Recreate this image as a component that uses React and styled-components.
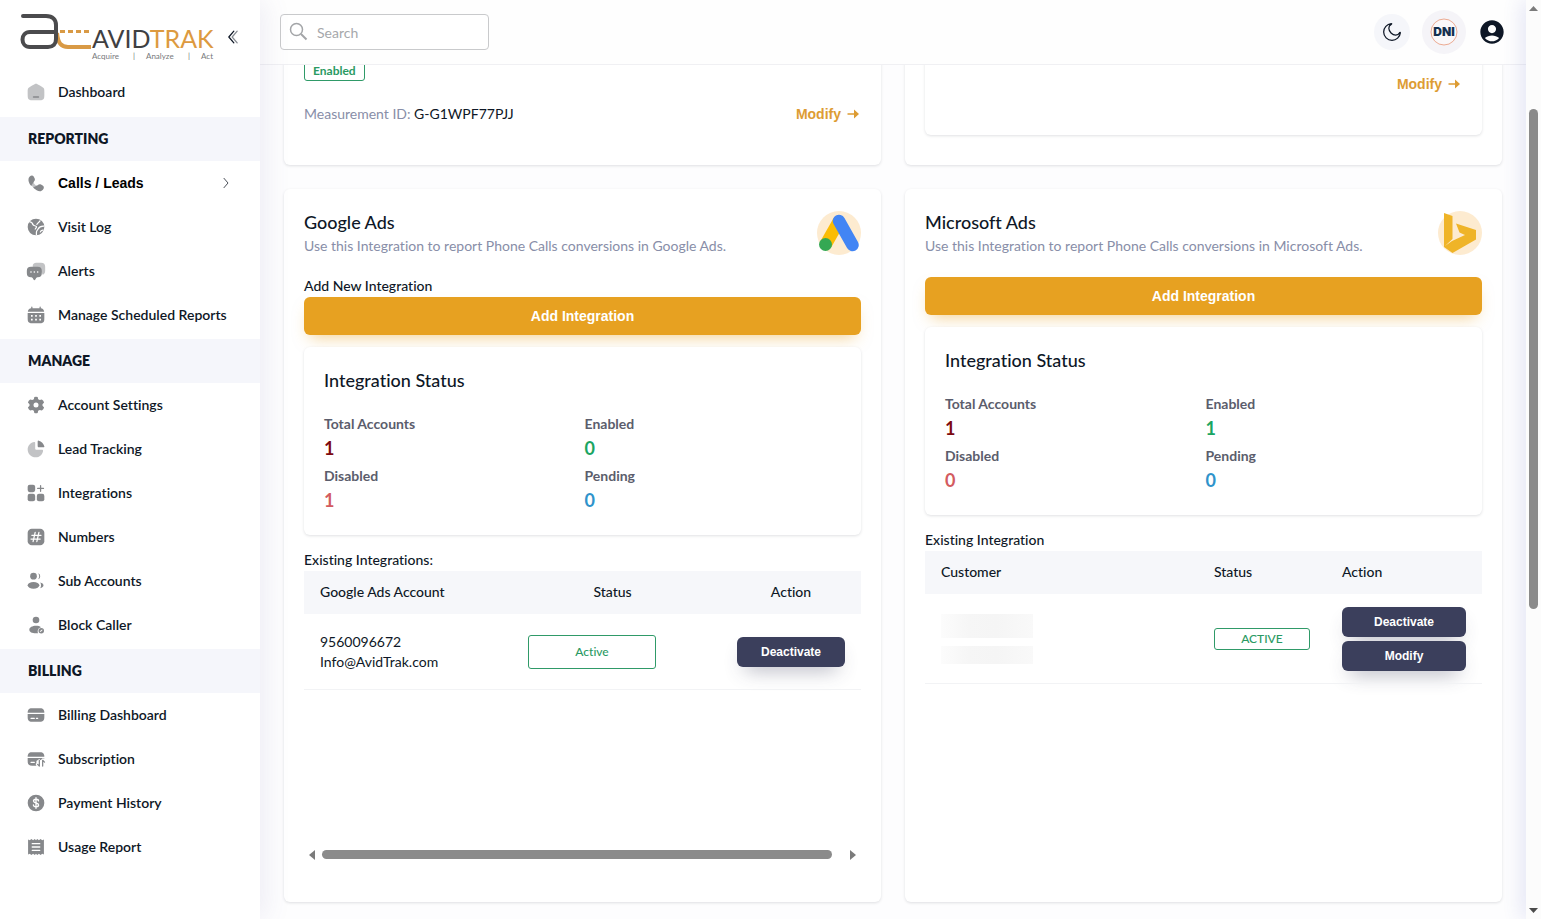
import React from 'react'
import styled, { createGlobalStyle, css } from 'styled-components'

const GlobalStyle = createGlobalStyle`
  * {
    box-sizing: border-box;
  }
  body {
    margin: 0;
    background: #fdfdfe;
    color: #0e1726;
    font-family: Lato, 'Open Sans', sans-serif;
    font-size: 14px;
    font-variant-ligatures: none;
    line-height: 20px;
  }
  button, input {
    font: inherit;
  }
`

/* ---------- icons ---------- */

const Svg = styled.svg`
  width: ${props => props.$size || 20}px;
  height: ${props => props.$size || 20}px;
  flex: none;
  display: block;
`

const icons = {
  home: (
    <>
      <path opacity="0.5" d="M2 12.2C2 9.9 2 8.8 2.5 7.8C3 6.9 4 6.3 5.9 5.1L7.9 3.9C9.9 2.6 10.9 2 12 2C13.1 2 14.1 2.6 16.1 3.9L18.1 5.1C20 6.3 21 6.9 21.5 7.8C22 8.8 22 9.9 22 12.2V13.7C22 17.6 22 19.6 20.8 20.8C19.7 22 17.8 22 14 22H10C6.2 22 4.3 22 3.2 20.8C2 19.6 2 17.6 2 13.7Z" />
      <rect x="8.2" y="17.2" width="7.6" height="1.6" rx="0.8" />
    </>
  ),
  phone: (
    <>
      <path d="M9.2 4.2L10.3 6.2C11 7.500 10.700 9.100 9.600 10.200L8 12.500L6.300 15.500C3.200 12 2.800 9.500 3 7.500C3.100 6.200 3.500 5.200 4.500 4.200C6 2.700 8.200 2.500 9.200 4.200Z" />
      <path d="M8.500 17.500L14 14.600C15.100 13.500 16.800 13.200 18 13.900L20 15C21.800 16.100 21.900 18.400 20.300 20C19.300 21 18.200 21.800 16.800 21.900C14.500 22 11.500 20.500 8.500 17.500Z" />
      <path opacity="0.5" d="M9.600 10.200C8.800 11 9 12.100 10.600 13.700C12.200 15.300 13.200 15.400 14 14.600L10.500 19L5 13.500Z" />
    </>
  ),
  globe: (
    <>
      <circle cx="12" cy="12" r="10" />
      <path d="M4 5.6C7 6 8 7.600 8.400 9.400C9 11 11.500 10 12.500 11.500C13 13 11 13.500 11 15M22 11C17.500 10.500 15.500 12.500 14.500 14.500C13.800 16 12.500 16 12.500 18.500V22M17 4C16.500 6.500 13.500 6.500 12.800 9.500M21 15.800C19 15.500 17.500 16.500 17 18.500" fill="none" stroke="#fff" strokeWidth="1.5" />
    </>
  ),
  chat: (
    <>
      <path opacity="0.5" d="M8 6.500C8 3.500 9.500 2 12.500 2H18C21.500 2 23 3.500 23 7V11.500C23 14.500 22 16 20 16.500L17 10L8 7Z" />
      <path fillRule="evenodd" d="M6 7H14C17.500 7 19 8.500 19 12V14.500C19 18 17.500 19.500 14 19.500C13.200 19.500 12.700 19.700 12.200 20.500L11.200 22.300C10.700 23.200 9.500 23.200 9 22.300L8 20.500C7.500 19.700 7 19.500 6 19.500C2.500 19.500 1 18 1 14.500V12C1 8.500 2.500 7 6 7ZM5 13.200A1 1 0 1 0 7 13.200A1 1 0 1 0 5 13.200ZM9 13.200A1 1 0 1 0 11 13.200A1 1 0 1 0 9 13.200ZM13 13.200A1 1 0 1 0 15 13.200A1 1 0 1 0 13 13.200Z" />
    </>
  ),
  calendar: (
    <>
      <path d="M7 1.750C7.400 1.750 7.750 2.100 7.750 2.500V4H16.250V2.500A0.750 0.750 0 0 1 17.750 2.500V4C20 4.200 21.500 5.500 21.800 8H2.200C2.500 5.500 4 4.200 6.250 4V2.500C6.250 2.100 6.600 1.750 7 1.750Z" />
      <path d="M2 9.500H22V14C22 17.800 22 19.700 20.800 20.800C19.700 22 17.800 22 14 22H10C6.200 22 4.300 22 3.200 20.800C2 19.700 2 17.800 2 14Z" />
      <path d="M6 13H8M11 13H13M16 13H18M6 17.500H8M11 17.500H13M16 17.500H18" stroke="#fff" strokeWidth="2" />
    </>
  ),
  gear: (
    <path fillRule="evenodd" d="M10 2.500Q12 1.500 14 2.500L14.600 5L16.500 6L19 5.300Q21 6.600 21.700 9L19.800 11V13L21.700 15Q21 17.400 19 18.700L16.500 18L14.600 19L14 21.500Q12 22.500 10 21.500L9.400 19L7.500 18L5 18.700Q3 17.400 2.300 15L4.200 13V11L2.300 9Q3 6.600 5 5.300L7.500 6L9.400 5ZM12 9A3 3 0 1 0 12 15A3 3 0 1 0 12 9Z" />
  ),
  pie: (
    <>
      <path opacity="0.5" d="M10 3.500C5.500 4 2 7.800 2 12.500C2 17.700 6.300 22 11.500 22C16.200 22 20.100 18.500 20.500 14C20.500 13.300 20.200 13 19.500 13H13C11.500 13 11 12.500 11 11V4.500C11 3.800 10.700 3.400 10 3.500Z" />
      <path d="M14 3C14 2.200 14.600 1.800 15.300 2C18.500 2.800 21.200 5.500 22 8.700C22.200 9.400 21.800 10 21 10H15.500C14.500 10 14 9.500 14 8.500Z" />
    </>
  ),
  widgets: (
    <>
      <rect x="2" y="2" width="9" height="9" rx="2.500" />
      <rect x="2" y="13" width="9" height="9" rx="2.500" />
      <rect x="13" y="13" width="9" height="9" rx="2.500" />
      <path d="M17.500 3V10M14 6.500H21" stroke="currentColor" strokeWidth="1.500" strokeLinecap="round" />
    </>
  ),
  hash: (
    <>
      <rect x="2" y="2" width="20" height="20" rx="5" />
      <path d="M11 6.500L8.500 17.500M15.500 6.500L13 17.500M7 10H18M6 14.500H17" stroke="#fff" strokeWidth="1.500" strokeLinecap="round" />
    </>
  ),
  users: (
    <>
      <circle cx="9" cy="6.200" r="4" />
      <path d="M14.500 2.600A3.800 3.800 0 0 1 14.500 9.800A6 6 0 0 0 14.500 2.600Z" />
      <ellipse cx="9" cy="17.200" rx="7" ry="4" />
      <path d="M17 13.700C19.500 14.200 21 15.500 21 17.200C21 18.900 19.500 20.200 17 20.600C18.400 19 18.400 15.500 17 13.700Z" />
    </>
  ),
  block: (
    <>
      <circle cx="12" cy="6" r="4" />
      <path d="M12 13C7.600 13 4 15 4 17.700C4 20.400 7 22 12 22H14.500C13.500 19.500 14 16 18 14.700C16.500 13.600 14.500 13 12 13Z" />
      <path fillRule="evenodd" d="M18.300 15.500A3.300 3.300 0 1 1 18.300 22.100A3.300 3.300 0 1 1 18.300 15.500ZM16.500 19.500L17.500 20.400L20 18L19.200 17.300Z" />
    </>
  ),
  card: (
    <>
      <path d="M2 9.250C2 6.500 3.200 4 7 4H17C20.800 4 22 6.500 22 9.250Z" />
      <path fillRule="evenodd" d="M2 10.750H22V14C22 18.200 21 20 16.500 20H7.500C3 20 2 18.200 2 14ZM6 15.250H10A0.750 0.750 0 0 1 10 16.750H6A0.750 0.750 0 0 1 6 15.250ZM12.500 15.250H14A0.750 0.750 0 0 1 14 16.750H12.500A0.750 0.750 0 0 1 12.500 15.250Z" />
    </>
  ),
  cardTransfer: (
    <>
      <path d="M2 9.250C2 6.500 3.200 4 7 4H17C20.800 4 22 6.500 22 9.250Z" />
      <path fillRule="evenodd" d="M2 10.750H22V11.500L20 11L17.500 13.500L16 12L12.500 14.500V17L11.500 18L12.500 20H7.500C3 20 2 18.200 2 14ZM6 15.250H10A0.750 0.750 0 0 1 10 16.750H6A0.750 0.750 0 0 1 6 15.250Z" />
      <path d="M16 13.500V20.500L14 18.500M20 20.500V13.500L22.200 15.700" fill="none" stroke="currentColor" strokeWidth="1.500" strokeLinecap="round" strokeLinejoin="round" />
    </>
  ),
  dollar: (
    <>
      <circle cx="12" cy="12" r="10" />
      <path d="M15 9.500C15 8.200 13.700 7.500 12 7.500C10.300 7.500 9 8.300 9 9.700C9 11 10.200 11.600 12 12C13.800 12.400 15.100 13 15.100 14.400C15.100 15.800 13.700 16.600 12 16.600C10.200 16.600 9 15.800 8.900 14.400M12 5.700V18.300" fill="none" stroke="#fff" strokeWidth="1.600" strokeLinecap="round" />
    </>
  ),
  receipt: (
    <>
      <path d="M2.500 3L4.500 4L6.500 2.500L8.500 4L10.500 2.500L12 4L13.500 2.500L15.500 4L17.500 2.500L19.500 4L21.500 3V21L19.500 20L17.500 21.500L15.500 20L13.500 21.500L12 20L10.500 21.500L8.500 20L6.500 21.500L4.500 20L2.500 21Z" />
      <path d="M7.500 8H16.500M7.500 12H16.500M7.500 16H16.500" stroke="#fff" strokeWidth="1.600" strokeLinecap="round" />
    </>
  ),
}

const Icon = ({ name }) => (
  <Svg viewBox="0 0 24 24" fill="currentColor" aria-hidden="true">
    {icons[name]}
  </Svg>
)

const LogoSvg = styled.svg`
  display: block;
  width: 200px;
  height: 52px;
  flex: none;
`

const Logo = () => (
  <LogoSvg viewBox="0 0 200 52" role="img" aria-label="AvidTrak">
    <g fill="none" strokeWidth="4">
      <path d="M43 20.500H72" stroke="#d99a45" strokeWidth="3" strokeDasharray="5 3" />
      <path d="M40 22C41 32 44 36 51 36H74" stroke="#d99a45" />
      <path d="M6 5H29C36 5 39 9 39 14V28C39 33 36 36 31 36H13C8 36 5.500 32.500 5.500 28.500C5.500 24.500 8 21 13 21H39" stroke="#4b4b4d" strokeLinecap="round" />
    </g>
    <text x="75" y="37" fontFamily="Lato" fontWeight="400" fontSize="25" fill="#3f4042">
      AVID<tspan fill="#dd9a3f">TRAK</tspan>
    </text>
    <g fontFamily="Lato" fontSize="8" fill="#77787b">
      <text x="75" y="48">Acquire</text>
      <text x="116" y="48">|</text>
      <text x="129" y="48">Analyze</text>
      <text x="171" y="48">|</text>
      <text x="184" y="48">Act</text>
    </g>
  </LogoSvg>
)

const GoogleAdsLogo = () => (
  <Svg $size={44} viewBox="0 0 44 44" aria-hidden="true">
    <circle cx="22" cy="22" r="22" fill="#fdebd0" />
    <path d="M22 10L9 33" stroke="#fbbc04" strokeWidth="12.500" />
    <path d="M22 10L35.500 34" stroke="#4285f4" strokeWidth="12.500" strokeLinecap="round" />
    <circle cx="8.500" cy="33.500" r="6.500" fill="#34a853" />
  </Svg>
)

const BingLogo = () => (
  <Svg $size={44} viewBox="0 0 44 44" aria-hidden="true">
    <circle cx="22" cy="22" r="22" fill="#fdebd0" />
    <path d="M6 2L14.500 5V28L7 35L14 30L27 24L21.500 21.500L18 12.500L38 19V28.500L14.500 42L6 36Z" fill="#efb428" />
  </Svg>
)

/* ---------- sidebar ---------- */

const Sidebar = styled.aside`
  width: 260px;
  flex: none;
  background: #fff;
  box-shadow: 5px 0 25px 0 rgba(94, 92, 154, 0.1);
  position: relative;
  z-index: 3;
`

const SidebarTop = styled.div`
  display: flex;
  align-items: center;
  justify-content: space-between;
  height: 70px;
  padding: 4px 16px 0 17px;
`

const IconButton = styled.button`
  display: flex;
  align-items: center;
  justify-content: center;
  width: ${props => props.$size}px;
  height: ${props => props.$size}px;
  padding: 0;
  border: 0;
  border-radius: 50%;
  background: ${props => props.$bg || 'none'};
  color: #0e1726;
`

const GroupTitle = styled.h2`
  margin: 3px 0 0;
  padding: 0 28px;
  background: #f5f6fb;
  font-size: 14px;
  font-weight: 800;
  line-height: 44px;
`

const NavList = styled.ul`
  list-style: none;
  margin: 0 0 -1px;
  padding: 0;

  &:first-child {
    margin-bottom: 0;
  }
`

const NavLink = styled.a`
  display: flex;
  align-items: center;
  gap: 12px;
  height: 44px;
  padding: 0 26px;
  color: #0e1726;
  font-weight: 600;
  text-decoration: none;

  > svg:first-child {
    color: #86888b;
  }
  ${props => props.$active && css`
    color: #000;
    font-family: 'Liberation Sans', Arial, sans-serif;
    font-weight: 700;
  `}
`

const NavText = styled.span`
  flex: 1;
  white-space: nowrap;
`

const groups = [
  { items: [['home', 'Dashboard']] },
  {
    title: 'REPORTING',
    items: [
      ['phone', 'Calls / Leads', true],
      ['globe', 'Visit Log'],
      ['chat', 'Alerts'],
      ['calendar', 'Manage Scheduled Reports'],
    ],
  },
  {
    title: 'MANAGE',
    items: [
      ['gear', 'Account Settings'],
      ['pie', 'Lead Tracking'],
      ['widgets', 'Integrations'],
      ['hash', 'Numbers'],
      ['users', 'Sub Accounts'],
      ['block', 'Block Caller'],
    ],
  },
  {
    title: 'BILLING',
    items: [
      ['card', 'Billing Dashboard'],
      ['cardTransfer', 'Subscription'],
      ['dollar', 'Payment History'],
      ['receipt', 'Usage Report'],
    ],
  },
]

const SideNav = () => (
  <Sidebar>
    <SidebarTop>
      <Logo />
      <IconButton $size={22} aria-label="Collapse menu">
        <Svg viewBox="0 0 24 24" fill="none" stroke="currentColor" strokeWidth="1.500" strokeLinecap="round" strokeLinejoin="round">
          <path d="M13 19L7 12L13 5" />
          <path opacity="0.5" d="M17 19L11 12L17 5" />
        </Svg>
      </IconButton>
    </SidebarTop>
    <nav>
      {groups.map((group, i) => (
        <React.Fragment key={i}>
          {group.title && <GroupTitle>{group.title}</GroupTitle>}
          <NavList>
            {group.items.map(([icon, text, active]) => (
              <li key={text}>
                <NavLink href="#" $active={active}>
                  <Icon name={icon} />
                  <NavText>{text}</NavText>
                  {active && (
                    <Svg $size={16} viewBox="0 0 24 24" fill="none" stroke="#4a4f58" strokeWidth="1.500" strokeLinecap="round" strokeLinejoin="round">
                      <path d="M9 5L15 12L9 19" />
                    </Svg>
                  )}
                </NavLink>
              </li>
            ))}
          </NavList>
        </React.Fragment>
      ))}
    </nav>
  </Sidebar>
)

/* ---------- top bar ---------- */

const TopBar = styled.header`
  display: flex;
  align-items: center;
  justify-content: space-between;
  flex: none;
  height: 65px;
  padding: 0 20px;
  background: #fefefe;
  border-bottom: 1px solid #f0f0f3;
  position: relative;
  z-index: 1;
`

const SearchBox = styled.label`
  display: flex;
  align-items: center;
  gap: 8px;
  width: 209px;
  height: 36px;
  padding: 0 8px;
  border: 1px solid #c9cacc;
  border-radius: 4px;
  background: #fff;
  color: #a3a5a8;
`

const SearchInput = styled.input`
  flex: 1;
  min-width: 0;
  padding: 2px 0 0;
  border: 0;
  outline: 0;
  background: none;

  &::placeholder {
    color: #a6a8ab;
    opacity: 1;
  }
`

const TopActions = styled.div`
  display: flex;
  align-items: center;
  gap: 12px;
`

const Header = () => (
  <TopBar>
    <SearchBox>
      <Svg viewBox="0 0 20 20" fill="none" stroke="currentColor" strokeWidth="1.500">
        <circle cx="7.500" cy="7.500" r="6" />
        <path d="M12 12L17.500 17.500" strokeWidth="2" />
      </Svg>
      <SearchInput type="text" placeholder="Search" aria-label="Search" />
    </SearchBox>
    <TopActions>
      <IconButton $size={36} $bg="#f5f6fa" aria-label="Toggle dark mode">
        <Svg viewBox="0 0 24 24" fill="none" stroke="currentColor" strokeWidth="1.500">
          <path d="M21.100 12.900C20.300 14.600 18.500 15.800 16.400 15.800C12.500 15.800 8.200 11.500 8.200 7.600C8.200 5.500 9.400 3.700 11.100 2.900C11.900 2.500 11.900 2 11 2C6 2.500 2 6.800 2 12C2 17.500 6.500 22 12 22C17.200 22 21.500 18 22 13C22 12.100 21.500 12.100 21.100 12.900Z" />
        </Svg>
      </IconButton>
      <IconButton $size={44} $bg="#f5f4f8" aria-label="DNI">
        <Svg $size={32} viewBox="0 0 32 32">
          <circle cx="16" cy="16" r="13" fill="#faf8fa" stroke="#ecab93" />
          <text x="16" y="20" textAnchor="middle" fontFamily="Inter" fontWeight="900" fontSize="12" fill="#14304f">DNI</text>
        </Svg>
      </IconButton>
      <IconButton $size={28} aria-label="Account">
        <Svg $size={28} viewBox="0 0 24 24" fill="currentColor">
          <path d="M12 2C6.480 2 2 6.480 2 12s4.480 10 10 10 10-4.480 10-10S17.520 2 12 2zm0 4c1.930 0 3.500 1.570 3.500 3.500S13.930 13 12 13s-3.500-1.570-3.500-3.500S10.070 6 12 6zm0 14c-2.030 0-4.430-.820-6.140-2.880C7.550 15.800 9.680 15 12 15s4.450.800 6.140 2.120C16.430 19.180 14.030 20 12 20z" />
        </Svg>
      </IconButton>
    </TopActions>
  </TopBar>
)

/* ---------- cards ---------- */

const panel = css`
  background: #fff;
  border-radius: 6px;
  box-shadow: 0 1px 3px rgba(14, 23, 38, 0.13);
`

const Card = styled.section`
  ${panel}
  display: flex;
  flex-direction: column;
  min-width: 0;
  padding: 20px 20px 40px;
`

const CardHead = styled.div`
  display: flex;
  align-items: center;
  justify-content: space-between;
  margin-bottom: 21px;
`

const Title = styled.h3`
  margin: 0;
  font-size: 18px;
  font-weight: 500;
  line-height: 27px;
`

const Note = styled.p`
  margin: 0;
  color: #888ea8;
`

const Label = styled.p`
  margin: ${props => (props.$spaced ? '15px 0 1px' : '-1px 0 1px')};
  font-weight: 500;
`

const PrimaryButton = styled.button`
  height: 38px;
  flex: none;
  border: 0;
  border-radius: 6px;
  background: #e7a121;
  box-shadow: 0 8px 16px -6px rgba(231, 161, 33, 0.5);
  color: #fff;
  font-family: 'Liberation Sans', Arial, sans-serif;
  font-weight: 700;
`

const StatusPanel = styled.div`
  ${panel}
  margin-top: 12px;
  padding: 20px;
`

const StatusGrid = styled.dl`
  display: grid;
  grid-template-columns: 1fr 1fr;
  gap: 4px;
  margin: 20px 0 1px;
`

const StatusName = styled.dt`
  color: #5b5d6c;
  font-weight: 700;
`

const StatusValue = styled.dd`
  margin: 0;
  color: ${props => props.$color};
  font-size: 18px;
  font-weight: 700;
  line-height: 28px;
`

const Status = ({ values }) => (
  <StatusPanel>
    <Title as="h4">Integration Status</Title>
    <StatusGrid>
      {values.map(([name, value, color]) => (
        <div key={name}>
          <StatusName>{name}</StatusName>
          <StatusValue $color={color}>{value}</StatusValue>
        </div>
      ))}
    </StatusGrid>
  </StatusPanel>
)

const Badge = styled.span`
  display: inline-flex;
  align-items: center;
  justify-content: center;
  vertical-align: middle;
  width: ${props => props.$width || 'auto'};
  height: ${props => props.$height}px;
  padding: 0 8px;
  border: 1px solid #2f9a68;
  border-radius: 3px;
  color: #2a9a63;
  font-size: 12px;
  font-weight: ${props => (props.$strong ? 700 : 500)};
`

const DarkButton = styled.button`
  display: block;
  width: 100%;
  height: 30px;
  padding: 0;
  border: 0;
  border-radius: 6px;
  background: #3b3f5c;
  box-shadow: 0 10px 20px -8px rgba(59, 63, 92, 0.45);
  color: #fff;
  font-family: 'Liberation Sans', Arial, sans-serif;
  font-size: 12px;
  font-weight: 700;

  & + & {
    margin-top: 4px;
  }
`

const ModifyLink = styled.a`
  display: inline-flex;
  align-items: center;
  gap: 4px;
  color: #dd9c33;
  font-family: 'Liberation Sans', Arial, sans-serif;
  font-weight: 700;
  text-decoration: none;
`

const Modify = () => (
  <ModifyLink href="#">
    Modify
    <Svg $size={16} viewBox="0 0 16 16" fill="currentColor">
      <path d="M2.500 7.300H9V3.500L14 8L9 12.500V8.700H2.500Z" />
    </Svg>
  </ModifyLink>
)

const Table = styled.table`
  width: 100%;
  table-layout: fixed;
  border-collapse: collapse;
`

const Th = styled.th`
  width: ${props => props.$width};
  height: 43px;
  padding: 0 16px 2px;
  background: #f6f7fa;
  font-weight: 500;
  text-align: left;
`

const CenterTh = styled(Th)`
  padding-right: ${props => props.$right || 16}px;
  text-align: center;
`

const Td = styled.td`
  height: 75px;
  padding: 13px 16px 12px;
  border-bottom: 1px solid #f2f3f5;
`

const Scrollable = styled.div`
  display: flex;
  flex-direction: column;
  justify-content: space-between;
  flex: 1;
`

const ScrollRow = styled.div`
  display: flex;
  align-items: center;
  gap: 7px;
  height: 15px;
  padding: 0 5px;
`

const ScrollTrack = styled.div`
  flex: 1;
  padding-right: 11px;

  &::before {
    content: '';
    display: block;
    height: 9px;
    border-radius: 5px;
    background: #8b8b8b;
  }
`

const ArrowSvg = styled(Svg)`
  width: 6px;
  height: 10px;
`

const Arrow = ({ d }) => (
  <ArrowSvg viewBox="0 0 6 10" fill="#7b7b7b">
    <path d={d} />
  </ArrowSvg>
)

const Hidden = styled.div`
  width: 92px;
  height: ${props => props.$height}px;
  background: linear-gradient(90deg, #fcfcfc, #f6f6f6 30%, #f5f5f5 60%, #f9f9f9);

  & + & {
    margin-top: 8px;
  }
`

const MeasureRow = styled.div`
  display: flex;
  align-items: center;
  justify-content: ${props => (props.$end ? 'flex-end' : 'space-between')};
`

const MeasureCard = styled(Card)`
  justify-content: space-between;
  padding: 19px 20px 41px;
`

const BadgeRow = styled.div`
  display: flex;
`

const Measurement = styled.p`
  margin: 0;
  color: #888ea8;

  span {
    color: #0e1726;
  }
`

const OuterCard = styled(Card)`
  padding: 0 20px 30px;
`

const InnerPanel = styled.div`
  ${panel}
  padding: 33px 20px 41px;
`

/* ---------- page ---------- */

const Page = styled.div`
  display: flex;
  height: 100vh;
  overflow: hidden;
`

const Main = styled.div`
  display: flex;
  flex-direction: column;
  flex: 1;
  min-width: 0;
`

/* the first row is partly scrolled under the top bar */
const Cards = styled.main`
  display: grid;
  grid-template-columns: 1fr 1fr;
  grid-template-rows: 124px 713px;
  gap: 24px;
  margin-top: -24px;
  padding: 0 24px;
`

const PageScroll = styled.div`
  display: flex;
  flex-direction: column;
  align-items: center;
  justify-content: space-between;
  width: 15px;
  flex: none;
  padding: 6px 0;
  background: #fcfcfc;
  box-shadow: -3px 0 20px rgba(80, 90, 190, 0.18);
  position: relative;
  z-index: 2;
`

const PageThumb = styled.div`
  width: 9px;
  height: 500px;
  margin-bottom: 202px;
  border-radius: 5px;
  background: #8b8b8b;
`

const UpDown = styled(Svg)`
  width: 9px;
  height: 5px;
`

const GOOGLE_STATUS = [
  ['Total Accounts', 1, '#7d0a10'],
  ['Enabled', 0, '#1ba562'],
  ['Disabled', 1, '#d35b60'],
  ['Pending', 0, '#2f93cb'],
]

const MICROSOFT_STATUS = [
  ['Total Accounts', 1, '#7d0a10'],
  ['Enabled', 1, '#1ba562'],
  ['Disabled', 0, '#d35b60'],
  ['Pending', 0, '#2f93cb'],
]

const App = () => (
  <>
    <GlobalStyle />
    <Page>
      <SideNav />
      <Main>
        <Header />
        <Cards>
          <MeasureCard>
            <BadgeRow>
              <Badge $height={21} $strong>Enabled</Badge>
            </BadgeRow>
            <MeasureRow>
              <Measurement>Measurement ID: <span>G-G1WPF77PJJ</span></Measurement>
              <Modify />
            </MeasureRow>
          </MeasureCard>

          <OuterCard>
            <InnerPanel>
              <MeasureRow $end>
                <Modify />
              </MeasureRow>
            </InnerPanel>
          </OuterCard>

          <Card>
            <CardHead>
              <div>
                <Title>Google Ads</Title>
                <Note>Use this Integration to report Phone Calls conversions in Google Ads.</Note>
              </div>
              <GoogleAdsLogo />
            </CardHead>
            <Label>Add New Integration</Label>
            <PrimaryButton>Add Integration</PrimaryButton>
            <Status values={GOOGLE_STATUS} />
            <Label $spaced>Existing Integrations:</Label>
            <Scrollable>
              <Table>
                <thead>
                  <tr>
                    <Th $width="208px">Google Ads Account</Th>
                    <CenterTh $right={24}>Status</CenterTh>
                    <CenterTh $width="140px">Action</CenterTh>
                  </tr>
                </thead>
                <tbody>
                  <tr>
                    <Td>9560096672<br />Info@AvidTrak.com</Td>
                    <Td><Badge $width="128px" $height={34}>Active</Badge></Td>
                    <Td><DarkButton>Deactivate</DarkButton></Td>
                  </tr>
                </tbody>
              </Table>
              <ScrollRow>
                <Arrow d="M6 0V10L0 5Z" />
                <ScrollTrack />
                <Arrow d="M0 0V10L6 5Z" />
              </ScrollRow>
            </Scrollable>
          </Card>

          <Card>
            <CardHead>
              <div>
                <Title>Microsoft Ads</Title>
                <Note>Use this Integration to report Phone Calls conversions in Microsoft Ads.</Note>
              </div>
              <BingLogo />
            </CardHead>
            <PrimaryButton>Add Integration</PrimaryButton>
            <Status values={MICROSOFT_STATUS} />
            <Label $spaced>Existing Integration</Label>
            <Table>
              <thead>
                <tr>
                  <Th $width="49%">Customer</Th>
                  <Th>Status</Th>
                  <Th $width="156px">Action</Th>
                </tr>
              </thead>
              <tbody>
                <tr>
                  <Td>
                    <Hidden $height={24} />
                    <Hidden $height={18} />
                  </Td>
                  <Td><Badge $width="96px" $height={22}>ACTIVE</Badge></Td>
                  <Td>
                    <DarkButton>Deactivate</DarkButton>
                    <DarkButton>Modify</DarkButton>
                  </Td>
                </tr>
              </tbody>
            </Table>
          </Card>
        </Cards>
      </Main>
      <PageScroll aria-hidden="true">
        <UpDown viewBox="0 0 9 5" fill="#7b7b7b"><path d="M0 5H9L4.500 0Z" /></UpDown>
        <PageThumb />
        <UpDown viewBox="0 0 9 5" fill="#4b4b4b"><path d="M0 0H9L4.500 5Z" /></UpDown>
      </PageScroll>
    </Page>
  </>
)

export default App
